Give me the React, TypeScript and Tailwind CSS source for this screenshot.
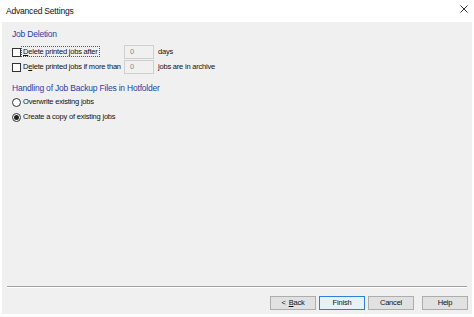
import React from 'react'

const font = { fontFamily: '"Liberation Sans", Arial, sans-serif' }

function Checkbox() {
  return <span className="w-[9px] h-[9px] border border-[#333] bg-white shrink-0" />
}

function Radio({ checked }: { checked?: boolean }) {
  return (
    <span className="w-[9px] h-[9px] rounded-full border border-[#333] bg-white shrink-0 flex items-center justify-center">
      {checked && <span className="w-[5px] h-[5px] rounded-full bg-[#222]" />}
    </span>
  )
}

function NumBox() {
  return (
    <div className="w-[30px] h-[14px] border border-[#cfcfcf] bg-[#f0f0f0] text-[#8a8a8a] pl-[5px] leading-[12px] shrink-0">
      0
    </div>
  )
}

function Btn({ children, focused }: { children: React.ReactNode; focused?: boolean }) {
  return (
    <div
      className={
        'w-[46px] h-[14px] flex items-center justify-center border leading-none whitespace-nowrap ' +
        (focused ? 'border-[#2f7fd6] bg-[#e5f1fb]' : 'border-[#adadad] bg-[#e1e1e1]')
      }
    >
      {children}
    </div>
  )
}

export default function App() {
  return (
    <div
      className="w-[474px] h-[317px] bg-white flex flex-col text-[7.5px] tracking-[-0.2px] text-[#111] whitespace-nowrap"
      style={font}
    >
      <div className="h-[22px] flex items-center justify-between pl-[6px] pr-[6px]">
        <span className="text-[8.5px] tracking-[-0.2px]">Advanced Settings</span>
        <svg width="8" height="8" viewBox="0 0 8 8" className="mt-[-4px]">
          <path d="M0.5 0.5 L7.5 7.5 M7.5 0.5 L0.5 7.5" stroke="#333" strokeWidth="1" />
        </svg>
      </div>
      <div className="mx-[2px] mb-[3px] flex-1 bg-[#f0f0f0] flex flex-col">
        <div className="pl-[10px] pt-[5px] flex flex-col">
          <div className="text-[#1f3fa6] text-[8.5px] tracking-[-0.2px] h-[14px] leading-[14px]">Job Deletion</div>
          <div className="flex items-center h-[14px] mt-[4px]">
            <Checkbox />
            <span className="ml-[1px] w-[102px]">
              <span className="outline outline-1 outline-dotted outline-[#555] px-[1px]">
                <span className="underline">D</span>elete printed jobs after
              </span>
            </span>
            <NumBox />
            <span className="ml-[4px]">days</span>
          </div>
          <div className="flex items-center h-[14px] mt-[1px]">
            <Checkbox />
            <span className="ml-[2px] w-[101px]">
              D<span className="underline">e</span>lete printed jobs if more than
            </span>
            <NumBox />
            <span className="ml-[4px]">jobs are in archive</span>
          </div>
          <div className="text-[#1f3fa6] text-[8.5px] tracking-[-0.2px] h-[14px] leading-[14px] mt-[7px]">
            Handling of Job Backup Files in Hotfolder
          </div>
          <div className="flex items-center h-[12px] mt-[1px] gap-[2px]">
            <Radio />
            <span>Overwrite existing jobs</span>
          </div>
          <div className="flex items-center h-[12px] mt-[3px] gap-[2px]">
            <Radio checked />
            <span>Create a copy of existing jobs</span>
          </div>
        </div>
        <div className="flex-1" />
        <div className="mx-[5px] border-t border-[#a0a0a0] border-b-white border-b" />
        <div className="flex justify-end gap-[3px] pr-[4px] pt-[8px] pb-[4px]">
          <Btn>
            &lt;<span className="ml-[3px] underline">B</span>ack
          </Btn>
          <Btn focused>Finish</Btn>
          <Btn>Cancel</Btn>
          <div className="w-[2px]" />
          <Btn>Help</Btn>
        </div>
      </div>
    </div>
  )
}
